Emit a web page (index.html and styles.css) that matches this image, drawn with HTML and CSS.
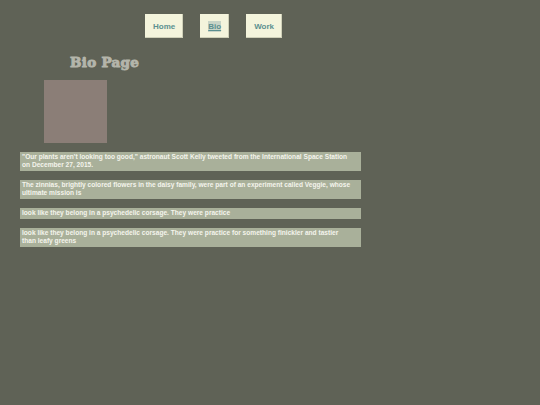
FILE: index.html
```
<!DOCTYPE html>
<html>
<head>
<meta charset="utf-8">
<link rel="stylesheet" href="styles.css">
</head>
<body>
<nav class="nav">
  <a class="btn" href="#">Home</a>
  <a class="btn active" href="#"><span>Bio</span></a>
  <a class="btn" href="#">Work</a>
</nav>
<h1 class="title">Bio Page</h1>
<div class="photo"></div>
<div class="posts">
  <p class="post">"Our plants aren't looking too good," astronaut Scott Kelly tweeted from the International Space Station on December 27, 2015.</p>
  <p class="post">The zinnias, brightly colored flowers in the daisy family, were part of an experiment called Veggie, whose ultimate mission is</p>
  <p class="post">look like they belong in a psychedelic corsage. They were practice</p>
  <p class="post">look like they belong in a psychedelic corsage. They were practice for something finickler and tastier than leafy greens</p>
</div>
</body>
</html>
```
FILE: styles.css
```
html, body {
  margin: 0;
  padding: 0;
  background: #5f6256;
  height: 100%;
}
body {
  font-family: "Liberation Sans", Arial, sans-serif;
}
.nav {
  display: flex;
  gap: 17px;
  padding: 14px 0 0 145px;
}
.btn {
  display: flex;
  align-items: center;
  justify-content: center;
  height: 24px;
  padding: 0 8px;
  box-sizing: border-box;
  background: #f4f4dc;
  color: #5c9090;
  font-size: 8px;
  font-weight: bold;
  text-decoration: none;
  box-shadow: inset -1px -1px 0 #cfd0b8;
}
.btn.active span {
  background: #c9d4c6;
  text-decoration: underline;
  padding: 1px 0;
}
.title {
  margin: 16px 0 0 70px;
  font-family: "DejaVu Serif", serif;
  font-weight: bold;
  font-size: 13.5px;
  line-height: 16px;
  color: #b4b5aa;
  -webkit-text-stroke: 0.9px #b4b5aa;
  letter-spacing: 0.3px;
}
.photo {
  width: 63px;
  height: 63px;
  margin: 10px 0 0 44px;
  background: #8b7e77;
}
.posts {
  display: flex;
  flex-direction: column;
  gap: 9px;
  margin: 9px 0 0 20px;
  width: 341px;
}
.post {
  margin: 0;
  background: #a9b09a;
  color: #f4f4ec;
  font-size: 6.6px;
  font-weight: bold;
  line-height: 8px;
  padding: 1px 10px 2px 2px;
}
```
